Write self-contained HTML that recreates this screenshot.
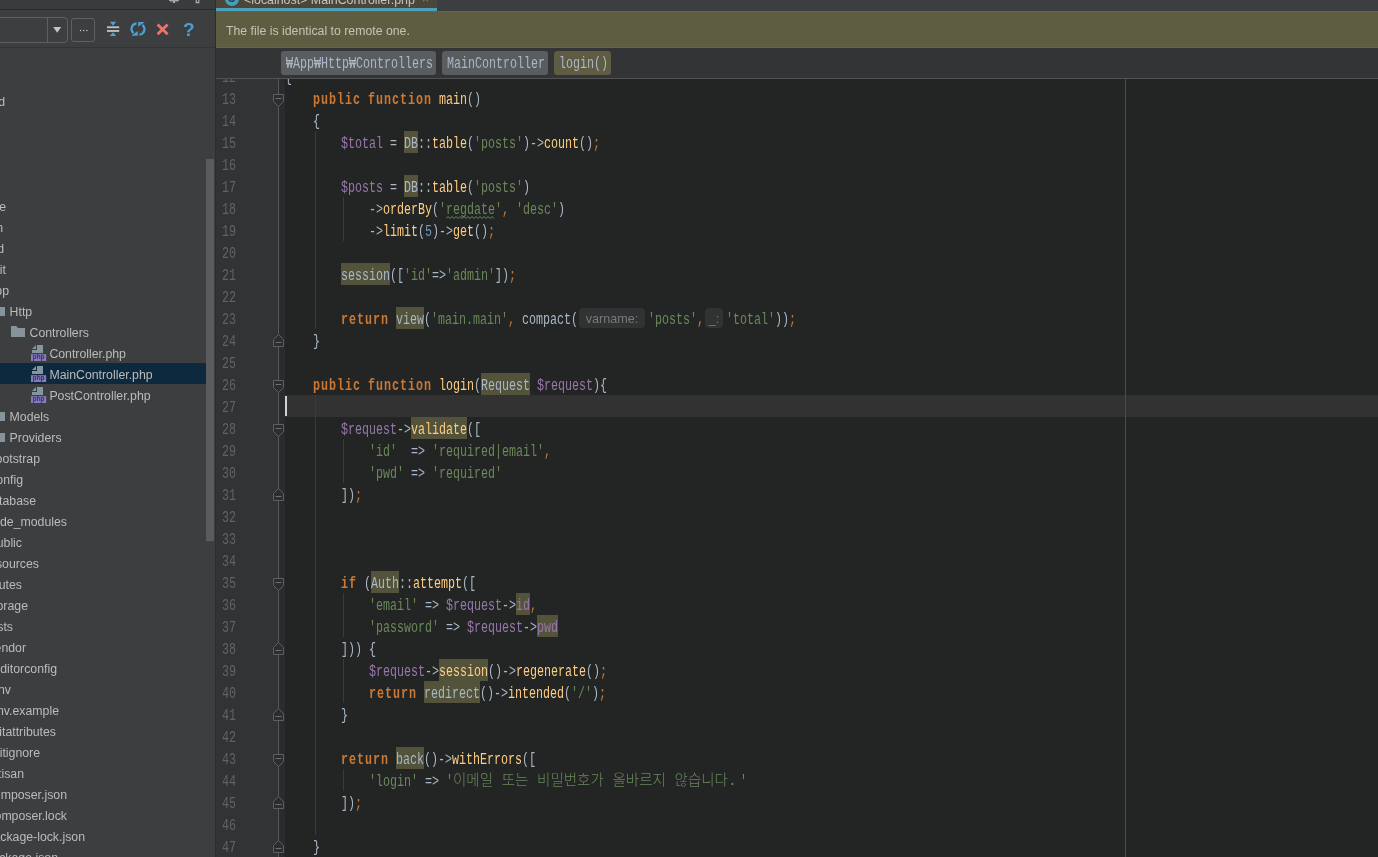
<!DOCTYPE html>
<html lang="ko"><head><meta charset="utf-8"><title>MainController.php</title>
<style>
*{box-sizing:border-box;margin:0;padding:0}
html,body{width:1378px;height:857px;overflow:hidden;background:#232525}
body{position:relative;font-family:"Liberation Sans","Noto Sans CJK KR",sans-serif;font-size:12.3px;color:#bbb}
i{display:block;position:absolute;font-style:normal}
#side{position:absolute;left:0;top:0;width:216px;height:857px;background:#3c3e40;border-right:1px solid #2b2d2e;overflow:hidden}
#side .hd{position:absolute;left:0;top:0;width:215px;height:9px;background:#383c3d}
#side .hl1{position:absolute;left:0;top:9px;width:215px;height:1px;background:#292b2c}
#side .hl2{position:absolute;left:0;top:47px;width:215px;height:1px;background:#323536}
.tr{position:absolute;white-space:pre;line-height:21px;height:21px;color:#bbb;margin-top:2px}
.ic{position:absolute;overflow:visible}
#sel{position:absolute;left:0;top:363px;width:206px;height:21px;background:#0d293e}
#sb{position:absolute;left:206px;top:159px;width:8px;height:382px;background:#595b5d}
#ed{position:absolute;left:216px;top:0;width:1162px;height:857px;overflow:hidden}
#tabs{position:absolute;left:216px;top:0;width:1162px;height:11px;background:#3c3e40;overflow:hidden}
#tab{position:absolute;left:0;top:0;width:221px;height:11px;background:#4c463a;border-bottom:3px solid #4aa0bb}
#tabt{position:absolute;left:28px;top:-7.5px;line-height:14px;white-space:pre;color:#c4c4c0;font-size:12.4px}
#ban{position:absolute;left:216px;top:11px;width:1162px;height:37px;background:#5e5d42;border-top:1px solid #65644a;border-bottom:1px solid #66654f}
#ban span{position:absolute;left:10px;top:-1px;line-height:40px;color:#c4c4b6;white-space:pre}
#bc{position:absolute;left:216px;top:48px;width:1162px;height:31px;background:#323436;border-bottom:1px solid #505253}
.chip{position:absolute;top:3px;height:24px;border-radius:3px;background:#5a5d5f;overflow:hidden}
.chip b{position:absolute;left:5px;top:2px;font-weight:normal;color:#c3c9ce}
#gut{position:absolute;left:216px;top:79px;width:63px;height:778px;background:#313335}
#gut2{position:absolute;left:279px;top:79px;width:6px;height:778px;background:#2a2c2c}
#fl{position:absolute;left:278px;top:79px;width:1px;height:778px;background:#55585a}
#code{position:absolute;left:0;top:79px;width:1378px;height:778px;overflow:hidden;will-change:transform}
#code>div{position:absolute;left:0;top:-79px;width:1378px;height:857px}
.t,.chip b{position:absolute;white-space:pre;font-family:"Liberation Mono","Noto Sans CJK KR",monospace;font-size:16.0px;line-height:22px;height:22px;transform:scaleX(0.72905);transform-origin:0 0;color:#a9b7c6}
.t{padding-top:2px}
.k{color:#cc7832;font-weight:bold;letter-spacing:1.3717px}
.s{color:#6a8759}.v{color:#9876aa}.m{color:#ffcd80}.n{color:#6897bb}.o{color:#cc7832}.ln{color:#606366}
.kr{position:absolute;white-space:pre;font-family:"Liberation Mono","Noto Sans CJK KR",sans-serif;font-size:14.5px;font-weight:300;line-height:22px;height:22px;color:#6a8759;padding-top:1px}
.hl{height:22px;background:#52533a}
.ig{width:1px;background:#393b3b}
.wave{height:3px;background:repeating-linear-gradient(135deg,transparent 0 1px,#5f9462 1px 2px,transparent 2px 3px),transparent;opacity:.9}
.hint{position:absolute;height:20px;border-radius:4px;background:#303333;color:#77797a;font-size:12.6px;line-height:22px;text-align:center;white-space:pre}
.fm{position:absolute}
#cl{position:absolute;left:285px;top:395px;width:1093px;height:22px;background:#323232}
#car{position:absolute;left:285px;top:396px;width:2px;height:20px;background:#d0d0d0}
#side,#ban,#bc,#tabs{will-change:transform}
#rm{position:absolute;left:1125px;top:79px;width:1px;height:778px;background:#4a4c4c}
</style></head><body>
<div id="ed"></div>
<div id="gut"></div><div id="gut2"></div>
<div id="cl"></div>
<div id="code"><div>
<i class="hl" style="left:404px;top:131px;width:14px"></i><i class="hl" style="left:404px;top:175px;width:14px"></i><svg class="fm" style="left:446px;top:216px" width="49" height="3" viewBox="0 0 49 3"><polyline points="0,2.5 2,0.5 4,2.5 6,0.5 8,2.5 10,0.5 12,2.5 14,0.5 16,2.5 18,0.5 20,2.5 22,0.5 24,2.5 26,0.5 28,2.5 30,0.5 32,2.5 34,0.5 36,2.5 38,0.5 40,2.5 42,0.5 44,2.5 46,0.5 48,2.5" fill="none" stroke="#5f8f5c" stroke-width="1"/></svg><i class="hl" style="left:341px;top:263px;width:49px"></i><i class="hl" style="left:396px;top:307px;width:28px"></i><i class="hl" style="left:481px;top:373px;width:49px"></i><i class="hl" style="left:411px;top:417px;width:56px"></i><i class="hl" style="left:371px;top:571px;width:28px"></i><i class="hl" style="left:516px;top:593px;width:14px"></i><i class="hl" style="left:537px;top:615px;width:21px"></i><i class="hl" style="left:439px;top:659px;width:49px"></i><i class="hl" style="left:424px;top:681px;width:56px"></i><i class="hl" style="left:396px;top:747px;width:28px"></i>
<i class="ig" style="left:315px;top:131px;height:198px"></i><i class="ig" style="left:315px;top:395px;height:440px"></i><i class="ig" style="left:343px;top:197px;height:44px"></i><i class="ig" style="left:343px;top:439px;height:44px"></i><i class="ig" style="left:343px;top:593px;height:44px"></i><i class="ig" style="left:343px;top:659px;height:44px"></i><i class="ig" style="left:343px;top:769px;height:22px"></i>
<i id="rm" style="top:0;height:857px"></i>
<i id="fl" style="top:0;height:857px"></i>
<svg class="fm" style="left:273px;top:94px" width="11" height="14" viewBox="0 0 11 14"><path d="M0.5 0.5H10.5V7.5L5.5 12.5L0.5 7.5Z" fill="#2b2d2e" stroke="#5d6062"/><path d="M2.5 4.5H8.5" stroke="#6c6f71"/></svg><svg class="fm" style="left:273px;top:380px" width="11" height="14" viewBox="0 0 11 14"><path d="M0.5 0.5H10.5V7.5L5.5 12.5L0.5 7.5Z" fill="#2b2d2e" stroke="#5d6062"/><path d="M2.5 4.5H8.5" stroke="#6c6f71"/></svg><svg class="fm" style="left:273px;top:424px" width="11" height="14" viewBox="0 0 11 14"><path d="M0.5 0.5H10.5V7.5L5.5 12.5L0.5 7.5Z" fill="#2b2d2e" stroke="#5d6062"/><path d="M2.5 4.5H8.5" stroke="#6c6f71"/></svg><svg class="fm" style="left:273px;top:578px" width="11" height="14" viewBox="0 0 11 14"><path d="M0.5 0.5H10.5V7.5L5.5 12.5L0.5 7.5Z" fill="#2b2d2e" stroke="#5d6062"/><path d="M2.5 4.5H8.5" stroke="#6c6f71"/></svg><svg class="fm" style="left:273px;top:754px" width="11" height="14" viewBox="0 0 11 14"><path d="M0.5 0.5H10.5V7.5L5.5 12.5L0.5 7.5Z" fill="#2b2d2e" stroke="#5d6062"/><path d="M2.5 4.5H8.5" stroke="#6c6f71"/></svg><svg class="fm" style="left:273px;top:334px" width="11" height="14" viewBox="0 0 11 14"><path d="M0.5 12.5H10.5V5.5L5.5 0.5L0.5 5.5Z" fill="#2b2d2e" stroke="#5d6062"/><path d="M2.5 8.5H8.5" stroke="#6c6f71"/></svg><svg class="fm" style="left:273px;top:488px" width="11" height="14" viewBox="0 0 11 14"><path d="M0.5 12.5H10.5V5.5L5.5 0.5L0.5 5.5Z" fill="#2b2d2e" stroke="#5d6062"/><path d="M2.5 8.5H8.5" stroke="#6c6f71"/></svg><svg class="fm" style="left:273px;top:642px" width="11" height="14" viewBox="0 0 11 14"><path d="M0.5 12.5H10.5V5.5L5.5 0.5L0.5 5.5Z" fill="#2b2d2e" stroke="#5d6062"/><path d="M2.5 8.5H8.5" stroke="#6c6f71"/></svg><svg class="fm" style="left:273px;top:708px" width="11" height="14" viewBox="0 0 11 14"><path d="M0.5 12.5H10.5V5.5L5.5 0.5L0.5 5.5Z" fill="#2b2d2e" stroke="#5d6062"/><path d="M2.5 8.5H8.5" stroke="#6c6f71"/></svg><svg class="fm" style="left:273px;top:796px" width="11" height="14" viewBox="0 0 11 14"><path d="M0.5 12.5H10.5V5.5L5.5 0.5L0.5 5.5Z" fill="#2b2d2e" stroke="#5d6062"/><path d="M2.5 8.5H8.5" stroke="#6c6f71"/></svg><svg class="fm" style="left:273px;top:840px" width="11" height="14" viewBox="0 0 11 14"><path d="M0.5 12.5H10.5V5.5L5.5 0.5L0.5 5.5Z" fill="#2b2d2e" stroke="#5d6062"/><path d="M2.5 8.5H8.5" stroke="#6c6f71"/></svg>
<span class="t ln" style="left:222px;top:65px">12</span><span class="t ln" style="left:222px;top:87px">13</span><span class="t ln" style="left:222px;top:109px">14</span><span class="t ln" style="left:222px;top:131px">15</span><span class="t ln" style="left:222px;top:153px">16</span><span class="t ln" style="left:222px;top:175px">17</span><span class="t ln" style="left:222px;top:197px">18</span><span class="t ln" style="left:222px;top:219px">19</span><span class="t ln" style="left:222px;top:241px">20</span><span class="t ln" style="left:222px;top:263px">21</span><span class="t ln" style="left:222px;top:285px">22</span><span class="t ln" style="left:222px;top:307px">23</span><span class="t ln" style="left:222px;top:329px">24</span><span class="t ln" style="left:222px;top:351px">25</span><span class="t ln" style="left:222px;top:373px">26</span><span class="t ln" style="left:222px;top:395px">27</span><span class="t ln" style="left:222px;top:417px">28</span><span class="t ln" style="left:222px;top:439px">29</span><span class="t ln" style="left:222px;top:461px">30</span><span class="t ln" style="left:222px;top:483px">31</span><span class="t ln" style="left:222px;top:505px">32</span><span class="t ln" style="left:222px;top:527px">33</span><span class="t ln" style="left:222px;top:549px">34</span><span class="t ln" style="left:222px;top:571px">35</span><span class="t ln" style="left:222px;top:593px">36</span><span class="t ln" style="left:222px;top:615px">37</span><span class="t ln" style="left:222px;top:637px">38</span><span class="t ln" style="left:222px;top:659px">39</span><span class="t ln" style="left:222px;top:681px">40</span><span class="t ln" style="left:222px;top:703px">41</span><span class="t ln" style="left:222px;top:725px">42</span><span class="t ln" style="left:222px;top:747px">43</span><span class="t ln" style="left:222px;top:769px">44</span><span class="t ln" style="left:222px;top:791px">45</span><span class="t ln" style="left:222px;top:813px">46</span><span class="t ln" style="left:222px;top:835px">47</span><span class="t ln" style="left:222px;top:857px">48</span>
<span class="t d" style="left:285px;top:65px">{</span><span class="t k" style="left:313px;top:87px">public</span><span class="t k" style="left:368px;top:87px">function</span><span class="t m" style="left:439px;top:87px">main</span><span class="t d" style="left:467px;top:87px">()</span><span class="t d" style="left:313px;top:109px">{</span><span class="t v" style="left:341px;top:131px">$total</span><span class="t d" style="left:390px;top:131px">= </span><span class="t d" style="left:404px;top:131px">DB</span><span class="t d" style="left:418px;top:131px">::</span><span class="t m" style="left:432px;top:131px">table</span><span class="t d" style="left:467px;top:131px">(</span><span class="t s" style="left:474px;top:131px">&#x27;posts&#x27;</span><span class="t d" style="left:523px;top:131px">)-&gt;</span><span class="t m" style="left:544px;top:131px">count</span><span class="t d" style="left:579px;top:131px">()</span><span class="t o" style="left:593px;top:131px">;</span><span class="t v" style="left:341px;top:175px">$posts</span><span class="t d" style="left:390px;top:175px">= </span><span class="t d" style="left:404px;top:175px">DB</span><span class="t d" style="left:418px;top:175px">::</span><span class="t m" style="left:432px;top:175px">table</span><span class="t d" style="left:467px;top:175px">(</span><span class="t s" style="left:474px;top:175px">&#x27;posts&#x27;</span><span class="t d" style="left:523px;top:175px">)</span><span class="t d" style="left:369px;top:197px">-&gt;</span><span class="t m" style="left:383px;top:197px">orderBy</span><span class="t d" style="left:432px;top:197px">(</span><span class="t s" style="left:439px;top:197px">&#x27;</span><span class="t s" style="left:446px;top:197px">regdate</span><span class="t s" style="left:495px;top:197px">&#x27;</span><span class="t o" style="left:502px;top:197px">,</span><span class="t s" style="left:516px;top:197px">&#x27;desc&#x27;</span><span class="t d" style="left:558px;top:197px">)</span><span class="t d" style="left:369px;top:219px">-&gt;</span><span class="t m" style="left:383px;top:219px">limit</span><span class="t d" style="left:418px;top:219px">(</span><span class="t n" style="left:425px;top:219px">5</span><span class="t d" style="left:432px;top:219px">)-&gt;</span><span class="t m" style="left:453px;top:219px">get</span><span class="t d" style="left:474px;top:219px">()</span><span class="t o" style="left:488px;top:219px">;</span><span class="t d" style="left:341px;top:263px">session</span><span class="t d" style="left:390px;top:263px">([</span><span class="t s" style="left:404px;top:263px">&#x27;id&#x27;</span><span class="t d" style="left:432px;top:263px">=&gt;</span><span class="t s" style="left:446px;top:263px">&#x27;admin&#x27;</span><span class="t d" style="left:495px;top:263px">])</span><span class="t o" style="left:509px;top:263px">;</span><span class="t k" style="left:341px;top:307px">return</span><span class="t d" style="left:396px;top:307px">view</span><span class="t d" style="left:424px;top:307px">(</span><span class="t s" style="left:431px;top:307px">&#x27;main.main&#x27;</span><span class="t o" style="left:508px;top:307px">,</span><span class="t d" style="left:522px;top:307px">compact(</span><span class="hint" style="left:579px;top:308px;width:66px">varname:</span><span class="t s" style="left:648px;top:307px">&#x27;posts&#x27;</span><span class="t o" style="left:697px;top:307px">,</span><span class="hint" style="left:705px;top:308px;width:18px">_:</span><span class="t s" style="left:726px;top:307px">&#x27;total&#x27;</span><span class="t d" style="left:775px;top:307px">))</span><span class="t o" style="left:789px;top:307px">;</span><span class="t d" style="left:313px;top:329px">}</span><span class="t k" style="left:313px;top:373px">public</span><span class="t k" style="left:368px;top:373px">function</span><span class="t m" style="left:439px;top:373px">login</span><span class="t d" style="left:474px;top:373px">(</span><span class="t d" style="left:481px;top:373px">Request</span><span class="t v" style="left:537px;top:373px">$request</span><span class="t d" style="left:593px;top:373px">){</span><span class="t v" style="left:341px;top:417px">$request</span><span class="t d" style="left:397px;top:417px">-&gt;</span><span class="t m" style="left:411px;top:417px">validate</span><span class="t d" style="left:467px;top:417px">([</span><span class="t s" style="left:369px;top:439px">&#x27;id&#x27;</span><span class="t d" style="left:411px;top:439px">=&gt; </span><span class="t s" style="left:432px;top:439px">&#x27;required|email&#x27;</span><span class="t o" style="left:544px;top:439px">,</span><span class="t s" style="left:369px;top:461px">&#x27;pwd&#x27;</span><span class="t d" style="left:411px;top:461px">=&gt; </span><span class="t s" style="left:432px;top:461px">&#x27;required&#x27;</span><span class="t d" style="left:341px;top:483px">])</span><span class="t o" style="left:355px;top:483px">;</span><span class="t k" style="left:341px;top:571px">if</span><span class="t d" style="left:364px;top:571px">(</span><span class="t d" style="left:371px;top:571px">Auth</span><span class="t d" style="left:399px;top:571px">::</span><span class="t m" style="left:413px;top:571px">attempt</span><span class="t d" style="left:462px;top:571px">([</span><span class="t s" style="left:369px;top:593px">&#x27;email&#x27;</span><span class="t d" style="left:425px;top:593px">=&gt; </span><span class="t v" style="left:446px;top:593px">$request</span><span class="t d" style="left:502px;top:593px">-&gt;</span><span class="t v" style="left:516px;top:593px">id</span><span class="t o" style="left:530px;top:593px">,</span><span class="t s" style="left:369px;top:615px">&#x27;password&#x27;</span><span class="t d" style="left:446px;top:615px">=&gt; </span><span class="t v" style="left:467px;top:615px">$request</span><span class="t d" style="left:523px;top:615px">-&gt;</span><span class="t v" style="left:537px;top:615px">pwd</span><span class="t d" style="left:341px;top:637px">])) {</span><span class="t v" style="left:369px;top:659px">$request</span><span class="t d" style="left:425px;top:659px">-&gt;</span><span class="t m" style="left:439px;top:659px">session</span><span class="t d" style="left:488px;top:659px">()-&gt;</span><span class="t m" style="left:516px;top:659px">regenerate</span><span class="t d" style="left:586px;top:659px">()</span><span class="t o" style="left:600px;top:659px">;</span><span class="t k" style="left:369px;top:681px">return</span><span class="t d" style="left:424px;top:681px">redirect</span><span class="t d" style="left:480px;top:681px">()-&gt;</span><span class="t m" style="left:508px;top:681px">intended</span><span class="t d" style="left:564px;top:681px">(</span><span class="t s" style="left:571px;top:681px">&#x27;/&#x27;</span><span class="t d" style="left:592px;top:681px">)</span><span class="t o" style="left:599px;top:681px">;</span><span class="t d" style="left:341px;top:703px">}</span><span class="t k" style="left:341px;top:747px">return</span><span class="t d" style="left:396px;top:747px">back</span><span class="t d" style="left:424px;top:747px">()-&gt;</span><span class="t m" style="left:452px;top:747px">withErrors</span><span class="t d" style="left:522px;top:747px">([</span><span class="t s" style="left:369px;top:769px">&#x27;login&#x27;</span><span class="t d" style="left:425px;top:769px">=&gt; </span><span class="t s" style="left:446px;top:769px">&#x27;</span><span class="kr s" style="left:453px;top:769px">이메일 또는 비밀번호가 올바르지 않습니다.</span><span class="t s" style="left:740px;top:769px">&#x27;</span><span class="t d" style="left:341px;top:791px">])</span><span class="t o" style="left:355px;top:791px">;</span><span class="t d" style="left:313px;top:835px">}</span>
<i id="car"></i>
</div></div>
<div id="tabs"><div id="tab"><svg style="position:absolute;left:9px;top:-8px" width="14" height="14" viewBox="0 0 14 14"><circle cx="7" cy="7" r="7" fill="#45a0bd"/></svg><span style="position:absolute;left:11.5px;top:-9px;font:bold 11px/14px 'Liberation Sans',sans-serif;color:#2f3b40">C</span><span id="tabt">&lt;localhost&gt; MainController.php</span><span style="position:absolute;left:206px;top:-8px;font:12px/14px 'Liberation Sans',sans-serif;color:#8a8778">×</span></div></div>
<div id="ban"><span>The file is identical to remote one.</span></div>
<div id="bc">
<div class="chip" style="left:65px;width:155px"><b>₩App₩Http₩Controllers</b></div>
<div class="chip" style="left:226px;width:106px"><b>MainController</b></div>
<div class="chip" style="left:338px;width:57px;background:#5e5c42"><b>login()</b></div>
</div>
<div id="side">
<div class="hd"></div><div class="hl1"></div><div class="hl2"></div>

<div style="position:absolute;left:-20px;top:17px;width:88px;height:26px;border:1px solid #5e6162;border-radius:4px"></div>
<div style="position:absolute;left:47px;top:18px;width:1px;height:24px;background:#5e6162"></div>
<svg style="position:absolute;left:53px;top:27px" width="9" height="6" viewBox="0 0 9 6"><path d="M0.2 0H8.2L4.2 5.7Z" fill="#c4c4c4"/></svg>
<div style="position:absolute;left:71px;top:18px;width:24px;height:24px;border:1px solid #5e6162;border-radius:3px"></div>
<svg style="position:absolute;left:79px;top:29px" width="9" height="3" viewBox="0 0 9 3"><rect x="0.9" y="0.9" width="1.2" height="1.2" fill="#ccc"/><rect x="4.1" y="0.9" width="1.2" height="1.2" fill="#ccc"/><rect x="7.3" y="0.9" width="1.2" height="1.2" fill="#ccc"/></svg>
<svg style="position:absolute;left:106px;top:21px" width="14" height="16" viewBox="0 0 14 16"><path d="M3.8 0.8H10.2L7 4.8Z" fill="#4da3da"/><path d="M3.8 15H10.2L7 11.2Z" fill="#4da3da"/><rect x="1" y="5.3" width="12.2" height="1.9" fill="#bebebb"/><rect x="1" y="9" width="12.2" height="1.9" fill="#bebebb"/></svg>
<svg style="position:absolute;left:130px;top:21px" width="16" height="16" viewBox="0 0 16 16"><g fill="none" stroke="#4d9fd6" stroke-width="2.3"><path d="M6.6 2.3A5.6 5.6 0 0 0 3.6 12.2"/><path d="M9.4 13.7A5.6 5.6 0 0 0 12.4 3.8"/></g><path d="M1.2 14.8H7.8V10Z" fill="#4d9fd6"/><path d="M14.8 1H8.2V5.8Z" fill="#4d9fd6"/></svg>
<svg style="position:absolute;left:156px;top:23px" width="13" height="13" viewBox="0 0 13 13"><path d="M1.6 1.4L11.6 11.2M11.6 1.4L1.6 11.2" stroke="#e8766c" stroke-width="2.8" fill="none"/></svg>
<span style="position:absolute;left:183px;top:17.5px;font:bold 19px/24px 'Liberation Sans',sans-serif;color:#4b9fd2">?</span>
<svg style="position:absolute;left:168px;top:0" width="12" height="4" viewBox="0 0 12 4"><path d="M1 0H11V0.8L9.8 1.6H8.2L7.2 0.9V3H4.8V0.9L3.8 1.6H2.2L1 0.8Z" fill="#a4a7a9"/></svg>
<svg style="position:absolute;left:195px;top:-3px" width="5" height="7" viewBox="0 0 5 7"><path d="M1.2 0V5.6H3.8V0" fill="none" stroke="#b4b6b8" stroke-width="1.1"/></svg>

<div id="sel"></div>
<span class="tr" style="right:210.0px;top:90px">public_html/blog/d</span><span class="tr" style="right:209.0px;top:195px">storage</span><span class="tr" style="right:212.0px;top:216px">admin</span><span class="tr" style="right:211.0px;top:237px">old</span><span class="tr" style="right:209.0px;top:258px">.git</span><span class="tr" style="right:206.0px;top:279px">app</span><span class="tr" style="left:9.6px;top:300px">Http</span><svg class="ic" style="left:-9px;top:305px" width="14" height="11" viewBox="0 0 14 11"><path d="M0 0H5.2L7 2H14V11H0Z" fill="#87939a"/></svg><span class="tr" style="left:29.5px;top:321px">Controllers</span><svg class="ic" style="left:11px;top:326px" width="14" height="11" viewBox="0 0 14 11"><path d="M0 0H5.2L7 2H14V11H0Z" fill="#87939a"/></svg><span class="tr" style="left:49.4px;top:342px">Controller.php</span><svg class="ic" style="left:31px;top:345px" width="16" height="16" viewBox="0 0 16 16"><path d="M6 0H12V8H1V5H6Z" fill="#84959e"/><path d="M5 0V4H1Z" fill="#84959e"/><rect x="0" y="9.2" width="15.2" height="6.8" fill="#857bb8"/><text x="7.6" y="14.4" font-family="Liberation Sans, sans-serif" font-size="6.3" font-weight="bold" text-anchor="middle" fill="#3a2a6e">php</text></svg><span class="tr" style="left:49.4px;top:363px">MainController.php</span><svg class="ic" style="left:31px;top:366px" width="16" height="16" viewBox="0 0 16 16"><path d="M6 0H12V8H1V5H6Z" fill="#84959e"/><path d="M5 0V4H1Z" fill="#84959e"/><rect x="0" y="9.2" width="15.2" height="6.8" fill="#857bb8"/><text x="7.6" y="14.4" font-family="Liberation Sans, sans-serif" font-size="6.3" font-weight="bold" text-anchor="middle" fill="#3a2a6e">php</text></svg><span class="tr" style="left:49.4px;top:384px">PostController.php</span><svg class="ic" style="left:31px;top:387px" width="16" height="16" viewBox="0 0 16 16"><path d="M6 0H12V8H1V5H6Z" fill="#84959e"/><path d="M5 0V4H1Z" fill="#84959e"/><rect x="0" y="9.2" width="15.2" height="6.8" fill="#857bb8"/><text x="7.6" y="14.4" font-family="Liberation Sans, sans-serif" font-size="6.3" font-weight="bold" text-anchor="middle" fill="#3a2a6e">php</text></svg><span class="tr" style="left:9.6px;top:405px">Models</span><svg class="ic" style="left:-9px;top:410px" width="14" height="11" viewBox="0 0 14 11"><path d="M0 0H5.2L7 2H14V11H0Z" fill="#87939a"/></svg><span class="tr" style="left:9.6px;top:426px">Providers</span><svg class="ic" style="left:-9px;top:431px" width="14" height="11" viewBox="0 0 14 11"><path d="M0 0H5.2L7 2H14V11H0Z" fill="#87939a"/></svg><span class="tr" style="right:175.0px;top:447px">bootstrap</span><span class="tr" style="right:192.0px;top:468px">config</span><span class="tr" style="right:179.0px;top:489px">database</span><span class="tr" style="right:148.0px;top:510px">node_modules</span><span class="tr" style="right:193.0px;top:531px">public</span><span class="tr" style="right:176.0px;top:552px">resources</span><span class="tr" style="right:193.0px;top:573px">routes</span><span class="tr" style="right:187.0px;top:594px">storage</span><span class="tr" style="right:202.0px;top:615px">tests</span><span class="tr" style="right:189.0px;top:636px">vendor</span><span class="tr" style="right:158.0px;top:657px">.editorconfig</span><span class="tr" style="right:204.0px;top:678px">.env</span><span class="tr" style="right:156.0px;top:699px">.env.example</span><span class="tr" style="right:159.0px;top:720px">.gitattributes</span><span class="tr" style="right:175.0px;top:741px">.gitignore</span><span class="tr" style="right:191.0px;top:762px">artisan</span><span class="tr" style="right:148.0px;top:783px">composer.json</span><span class="tr" style="right:148.0px;top:804px">composer.lock</span><span class="tr" style="right:130.0px;top:825px">package-lock.json</span><span class="tr" style="right:157.0px;top:846px">package.json</span>
<div id="sb"></div>
</div>
</body></html>
